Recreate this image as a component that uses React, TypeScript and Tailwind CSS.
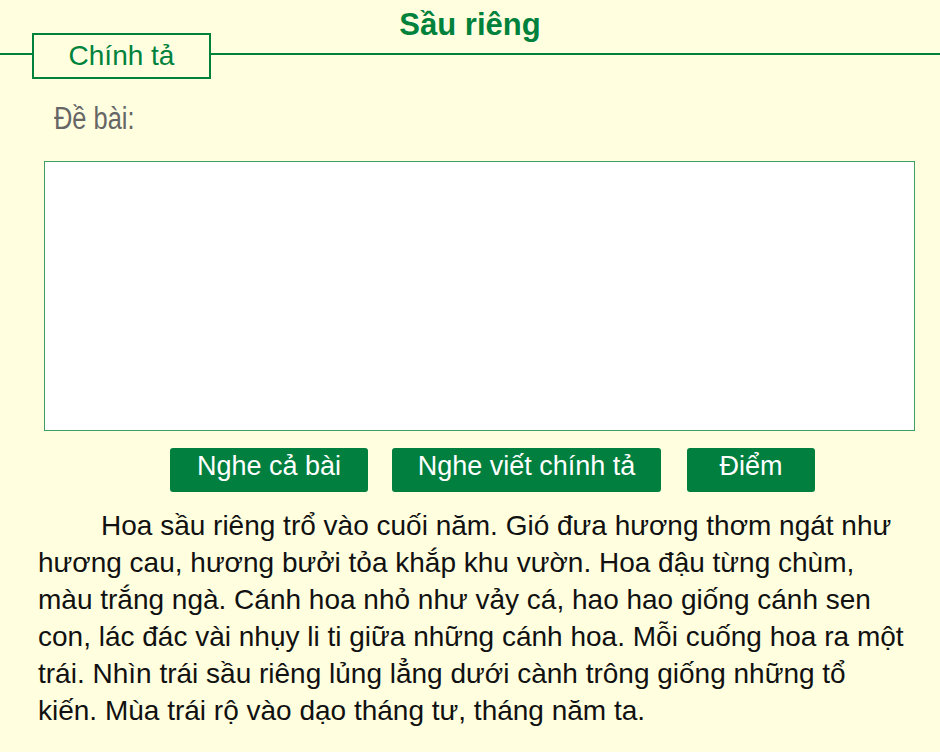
import React from "react";

const passage =
  "Hoa sầu riêng trổ vào cuối năm. Gió đưa hương thơm ngát như hương cau, hương bưởi tỏa khắp khu vườn. Hoa đậu từng chùm, màu trắng ngà. Cánh hoa nhỏ như vảy cá, hao hao giống cánh sen con, lác đác vài nhụy li ti giữa những cánh hoa. Mỗi cuống hoa ra một trái. Nhìn trái sầu riêng lủng lẳng dưới cành trông giống những tổ kiến. Mùa trái rộ vào dạo tháng tư, tháng năm ta.";

const buttons = [
  { label: "Nghe cả bài", cls: "w-[198px]" },
  { label: "Nghe viết chính tả", cls: "ml-[24px] w-[269px]" },
  { label: "Điểm", cls: "ml-[26px] w-[128px]" },
];

const App: React.FC = () => {
  return (
    <div className="min-h-[752px] w-[940px] bg-[#ffffe0] font-['Liberation_Sans',Arial,sans-serif]">
      {/* Title */}
      <h1 className="pt-[7px] text-center text-[31px] font-bold leading-[36px] text-[#00823c]">
        Sầu riêng
      </h1>

      {/* Tab label on the rule */}
      <div className="-mt-[10px] flex items-start">
        <div className="mt-[20px] h-[2px] w-[32px] bg-[#00823c]" />
        <div className="flex h-[46px] w-[179px] items-center justify-center border-2 border-[#00823c] text-[28px] leading-[32px] text-[#00823c]">
          Chính tả
        </div>
        <div className="mt-[20px] h-[2px] flex-1 bg-[#00823c]" />
      </div>

      {/* Prompt */}
      <div className="ml-[54px] mt-[22px]">
        <span className="inline-block origin-left scale-x-[0.82] text-[31px] leading-[36px] text-[#666666]">
          Đề bài:
        </span>
      </div>

      {/* Answer box */}
      <textarea
        className="ml-[44px] mt-[24px] block h-[270px] w-[871px] resize-none border border-[#3f9f63] bg-white outline-none"
        readOnly
      />

      {/* Actions */}
      <div className="mt-[17px] flex pl-[170px]">
        {buttons.map((b) => (
          <button
            key={b.label}
            className={`${b.cls} h-[44px] rounded-[3px] bg-[#007f3f] pb-[8px] text-center text-[27px] leading-[36px] text-white`}
          >
            {b.label}
          </button>
        ))}
      </div>

      {/* Passage */}
      <p className="mt-[15px] pl-[38px] pr-[30px] indent-[63px] text-[28px] leading-[37px] text-[#111111]">
        {passage}
      </p>
    </div>
  );
};

export default App;
